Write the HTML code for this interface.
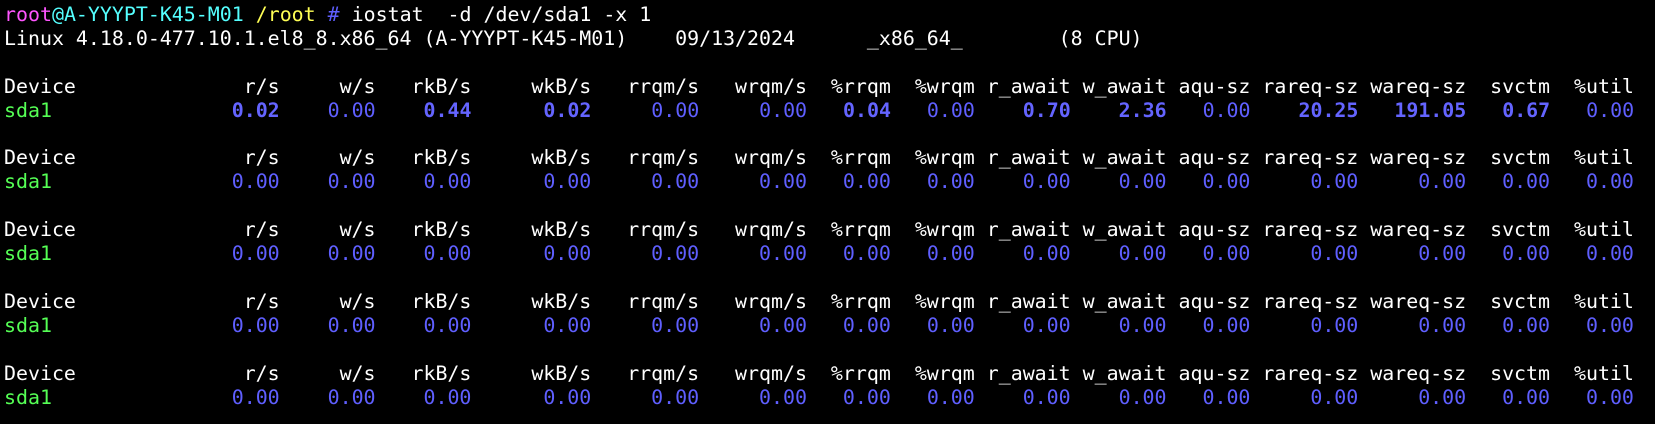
<!DOCTYPE html>
<html><head><meta charset="utf-8"><style>
html,body{margin:0;padding:0;background:#000;width:1655px;height:424px;overflow:hidden}
pre{margin:0;padding:3px 0 0 4px;font-family:"DejaVu Sans Mono","Liberation Mono",monospace;font-size:19.92px;line-height:23.9px;color:#fff}
.m{color:#ff55ff}.c{color:#55ffff}.y{color:#ffff55}.b{color:#5f5fff}.g{color:#55ff55}.B{color:#6464ff;font-weight:bold}
</style></head><body><pre><span class="m">root</span><span class="c">@A-YYYPT-K45-M01</span> <span class="y">/root</span> <span class="b">#</span> iostat  -d /dev/sda1 -x 1
Linux 4.18.0-477.10.1.el8_8.x86_64 (A-YYYPT-K45-M01)    09/13/2024      _x86_64_        (8 CPU)

Device              r/s     w/s   rkB/s     wkB/s   rrqm/s   wrqm/s  %rrqm  %wrqm r_await w_await aqu-sz rareq-sz wareq-sz  svctm  %util
<span class="g">sda1</span><span class="B">               0.02</span><span class="b">    0.00</span><span class="B">    0.44</span><span class="B">      0.02</span><span class="b">     0.00     0.00</span><span class="B">   0.04</span><span class="b">   0.00</span><span class="B">    0.70    2.36</span><span class="b">   0.00</span><span class="B">    20.25   191.05   0.67</span><span class="b">   0.00</span>

Device              r/s     w/s   rkB/s     wkB/s   rrqm/s   wrqm/s  %rrqm  %wrqm r_await w_await aqu-sz rareq-sz wareq-sz  svctm  %util
<span class="g">sda1</span><span class="b">               0.00    0.00    0.00      0.00     0.00     0.00   0.00   0.00    0.00    0.00   0.00     0.00     0.00   0.00   0.00</span>

Device              r/s     w/s   rkB/s     wkB/s   rrqm/s   wrqm/s  %rrqm  %wrqm r_await w_await aqu-sz rareq-sz wareq-sz  svctm  %util
<span class="g">sda1</span><span class="b">               0.00    0.00    0.00      0.00     0.00     0.00   0.00   0.00    0.00    0.00   0.00     0.00     0.00   0.00   0.00</span>

Device              r/s     w/s   rkB/s     wkB/s   rrqm/s   wrqm/s  %rrqm  %wrqm r_await w_await aqu-sz rareq-sz wareq-sz  svctm  %util
<span class="g">sda1</span><span class="b">               0.00    0.00    0.00      0.00     0.00     0.00   0.00   0.00    0.00    0.00   0.00     0.00     0.00   0.00   0.00</span>

Device              r/s     w/s   rkB/s     wkB/s   rrqm/s   wrqm/s  %rrqm  %wrqm r_await w_await aqu-sz rareq-sz wareq-sz  svctm  %util
<span class="g">sda1</span><span class="b">               0.00    0.00    0.00      0.00     0.00     0.00   0.00   0.00    0.00    0.00   0.00     0.00     0.00   0.00   0.00</span>
</pre></body></html>
